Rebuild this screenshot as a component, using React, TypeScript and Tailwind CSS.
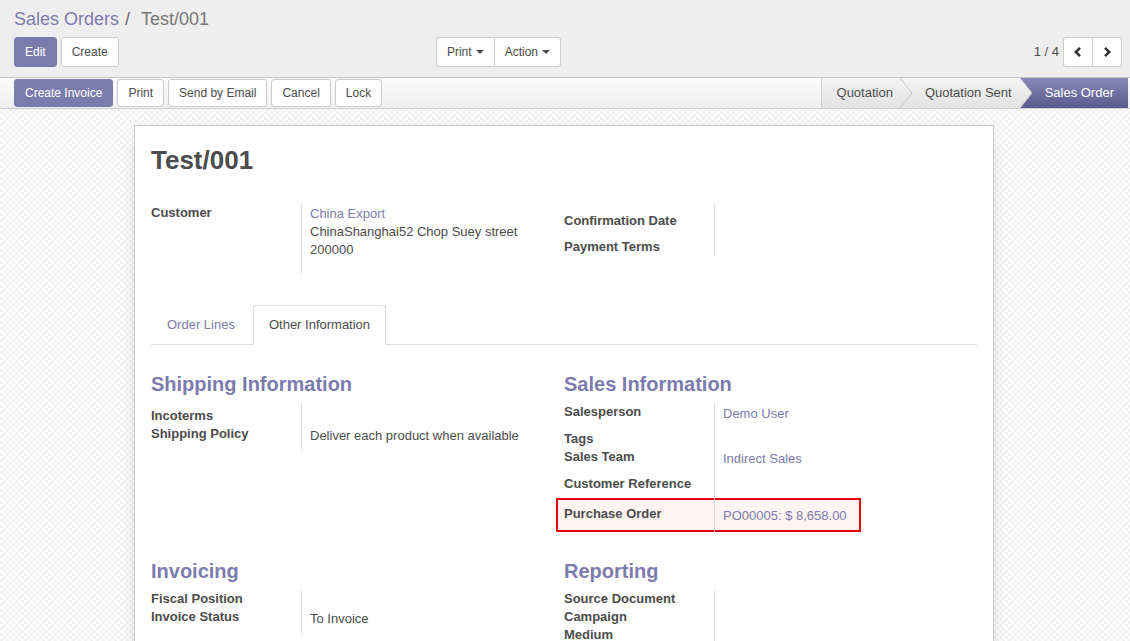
import React from "react";

type RowProps = {
  label: string;
  children?: React.ReactNode;
  rowClass?: string;
  labelClass?: string;
  valueClass?: string;
};

// one label / value line of a form group
function Row({ label, children, rowClass = "", labelClass = "", valueClass = "" }: RowProps) {
  return (
    <div className={`flex ${rowClass}`}>
      <div className={`w-[150px] shrink-0 font-bold ${labelClass}`}>{label}</div>
      <div className={`flex-1 border-l border-[#ddd] pl-2 ${valueClass}`}>{children}</div>
    </div>
  );
}

function Separator({ children }: { children: React.ReactNode }) {
  return <div className="mb-2 text-[20px] font-bold leading-[22px] text-[#7c7bad]">{children}</div>;
}

function Btn({ children, primary = false, className = "" }: { children: React.ReactNode; primary?: boolean; className?: string }) {
  return (
    <button
      className={`flex items-center rounded-[3px] border px-[10px] text-[12px] ${
        primary ? "border-[#7c7bad] bg-[#7c7bad] text-white" : "border-[#ccc] bg-white text-[#4c4c4c]"
      } ${className}`}
    >
      {children}
    </button>
  );
}

function Caret() {
  return <span className="ml-[4px] inline-block border-x-[4px] border-t-[4px] border-x-transparent border-t-[#4c4c4c]" />;
}

function Chevron({ dir }: { dir: "left" | "right" }) {
  return (
    <svg width="10" height="12" viewBox="0 0 10 12">
      <path
        d={dir === "left" ? "M7 1.8 L2.8 6 L7 10.2" : "M3 1.8 L7.2 6 L3 10.2"}
        fill="none"
        stroke="#333"
        strokeWidth="2.6"
      />
    </svg>
  );
}

// arrow tip of a status stage, lies over the next stage
function StageArrow({ id }: { id: string }) {
  return (
    <svg className="absolute left-full top-0 z-10" width="13" height="30" viewBox="0 0 13 30">
      <defs>
        <linearGradient id={id} x1="0" y1="0" x2="0" y2="1">
          <stop offset="0" stopColor="#f4f4f4" />
          <stop offset="1" stopColor="#e3e3e3" />
        </linearGradient>
      </defs>
      <path d="M0 0 L12 15 L0 30 Z" fill={`url(#${id})`} />
      <path d="M0 0 L12 15 L0 30" fill="none" stroke="#c9c9c9" strokeWidth="1" />
    </svg>
  );
}

export default function App() {
  return (
    <div className="min-h-screen bg-[image:repeating-conic-gradient(#f1f1f1_0%_25%,#fcfcfc_0%_50%)] bg-size-[6px_6px] font-['Liberation_Sans',Arial,sans-serif] text-[13px] leading-[18px] text-[#4c4c4c]">
      {/* Control panel */}
      <div className="border-b border-[#c4c4c4] bg-[#efeeee] pb-[10px] pl-[14px] pr-[8px] pt-[7px]">
        <div className="text-[18px] leading-[24px]">
          <span className="text-[#7c7bad]">Sales Orders</span>
          <span className="ml-[6px] mr-[11px] text-[#666]">/</span>
          <span className="text-[#777]">Test/001</span>
        </div>
        <div className="mt-[6px] grid h-[30px] grid-cols-2">
          <div className="flex justify-between pr-[7px]">
            <div className="flex gap-[4px]">
              <Btn primary className="h-[30px]">Edit</Btn>
              <Btn className="h-[30px]">Create</Btn>
            </div>
            <div className="flex">
              <Btn className="h-[30px] rounded-r-none">
                Print
                <Caret />
              </Btn>
              <Btn className="-ml-px h-[30px] rounded-l-none">
                Action
                <Caret />
              </Btn>
            </div>
          </div>
          <div className="flex items-center justify-end gap-[4px]">
            <span>1 / 4</span>
            <div className="flex">
              <button className="flex h-[30px] w-[30px] items-center justify-center rounded-l-[3px] border border-[#ccc] bg-white">
                <Chevron dir="left" />
              </button>
              <button className="-ml-px flex h-[30px] w-[30px] items-center justify-center rounded-r-[3px] border border-[#ccc] bg-white">
                <Chevron dir="right" />
              </button>
            </div>
          </div>
        </div>
      </div>

      {/* Status bar */}
      <div className="flex h-[31px] items-center justify-between border-b border-[#cfcfcf] bg-linear-to-b from-[#fbfbfb] to-[#f0f0f0] pl-[14px] pr-[2px]">
        <div className="flex gap-[4px]">
          <Btn primary className="h-[28px]">Create Invoice</Btn>
          <Btn className="h-[28px]">Print</Btn>
          <Btn className="h-[28px]">Send by Email</Btn>
          <Btn className="h-[28px]">Cancel</Btn>
          <Btn className="h-[28px]">Lock</Btn>
        </div>
        <div className="flex h-full">
          <div className="relative flex items-center border-l border-[#cfcfcf] bg-linear-to-b from-[#f4f4f4] to-[#e3e3e3] pl-[15px] pr-[7px]">
            Quotation
            <StageArrow id="g1" />
          </div>
          <div className="relative flex items-center bg-linear-to-b from-[#f4f4f4] to-[#e3e3e3] pl-[25px] pr-[8px]">
            Quotation Sent
            <StageArrow id="g2" />
          </div>
          <div className="flex items-center bg-linear-to-b from-[#8b89bb] to-[#5c5a8d] pl-[25px] pr-[14px] text-white">
            Sales Order
          </div>
        </div>
      </div>

      {/* Sheet */}
      <div className="ml-[134px] mt-4 min-h-[560px] w-[860px] border border-[#c8c8d3] bg-white px-4 pb-10 pt-[17px] shadow-[0_5px_20px_-15px_black]">
        <h1 className="text-[26px] font-bold leading-[34px] text-[#4c4c4c]">Test/001</h1>

        <div className="mt-[27px] grid grid-cols-2 items-start">
          <Row label="Customer" valueClass="pb-[15px] pt-[1px]">
            <div className="text-[#7c7bad]">China Export</div>
            <div>ChinaShanghai52 Chop Suey street</div>
            <div>200000</div>
          </Row>
          <div>
            <Row label="Confirmation Date" rowClass="h-[26px]" labelClass="pt-[8px]" />
            <Row label="Payment Terms" rowClass="h-[26px]" labelClass="pt-[8px]" />
          </div>
        </div>

        {/* Tabs */}
        <div className="mt-[31px] flex h-[40px] border-b border-[#ddd]">
          <div className="flex h-[39px] items-center px-4 text-[#7c7bad]">Order Lines</div>
          <div className="ml-[2px] flex h-[40px] items-center rounded-t-[3px] border border-[#ddd] border-b-white bg-white px-[15px] pb-px">
            Other Information
          </div>
        </div>

        <div className="pt-[28px]">
          <div className="grid grid-cols-2 items-start">
            <div>
              <Separator>Shipping Information</Separator>
              <Row label="Incoterms" rowClass="h-[22px]" labelClass="pt-[4px]" />
              <Row label="Shipping Policy" rowClass="h-[26px]" valueClass="pt-[2px]">
                Deliver each product when available
              </Row>
            </div>
            <div>
              <Separator>Sales Information</Separator>
              <Row label="Salesperson" rowClass="h-[27px]" valueClass="pt-[2px] text-[#7c7bad]">
                Demo User
              </Row>
              <Row label="Tags" rowClass="h-[18px]" />
              <Row label="Sales Team" rowClass="h-[27px]" valueClass="pt-[2px] text-[#7c7bad]">
                Indirect Sales
              </Row>
              <Row label="Customer Reference" rowClass="h-[23px]" />
              <div className="relative">
                <div className="absolute -left-2 top-0 h-[34px] w-[305px] border-2 border-[#e8000b] bg-[#fff4f4]" />
                <Row label="Purchase Order" rowClass="relative h-[34px]" labelClass="pt-[7px]" valueClass="pt-[9px] text-[#7c7bad]">
                  PO00005: $ 8,658.00
                </Row>
              </div>
            </div>
          </div>

          <div className="mt-[28px] grid grid-cols-2 items-start">
            <div>
              <Separator>Invoicing</Separator>
              <Row label="Fiscal Position" rowClass="h-[18px]" />
              <Row label="Invoice Status" rowClass="h-[27px]" valueClass="pt-[2px]">
                To Invoice
              </Row>
            </div>
            <div>
              <Separator>Reporting</Separator>
              <Row label="Source Document" rowClass="h-[18px]" />
              <Row label="Campaign" rowClass="h-[18px]" />
              <Row label="Medium" rowClass="h-[18px]" />
            </div>
          </div>
        </div>
      </div>
    </div>
  );
}
